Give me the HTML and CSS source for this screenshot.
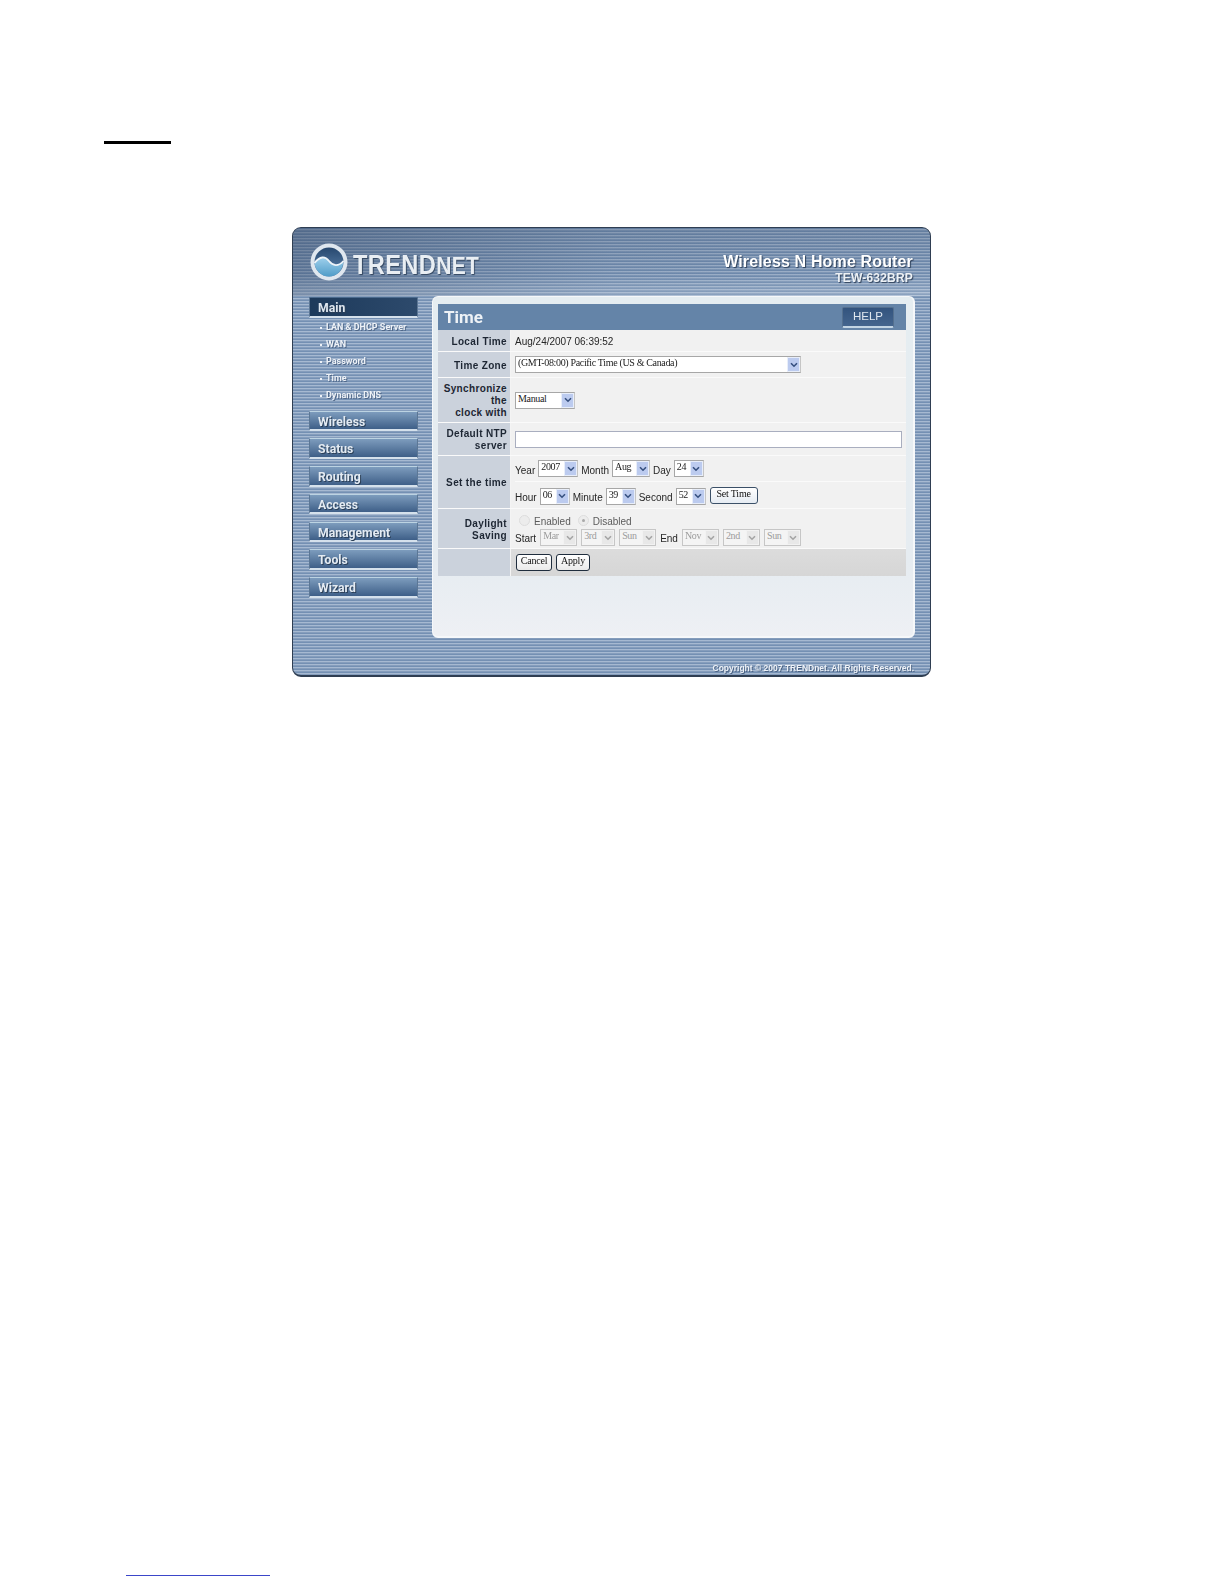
FILE: index.html
```html
<!DOCTYPE html>
<html lang="en">
<head>
<meta charset="utf-8">
<title>Time</title>
<link rel="stylesheet" href="styles.css">
</head>
<body>
<div class="rule"></div>
<div class="panel">
  <header class="top">
    <div class="logo">
      <svg class="globe" width="38" height="38" viewBox="0 0 38 38">
        <defs>
          <linearGradient id="gl" x1="0" y1="0" x2="0" y2="1">
            <stop offset="0" stop-color="#27486f"/><stop offset="1" stop-color="#5f86b0"/>
          </linearGradient>
          <linearGradient id="gw" x1="0" y1="0" x2="0" y2="1">
            <stop offset="0" stop-color="#9fd0ec"/><stop offset="1" stop-color="#4f9cc8"/>
          </linearGradient>
        </defs>
        <circle cx="19" cy="19" r="18.5" fill="#dfe7ef"/>
        <circle cx="19" cy="19" r="14.5" fill="url(#gl)"/>
        <path d="M4.5 20C10 13 15 13 19 18C23 23 28 24 33.5 18C33 27 27 33.5 19 33.5C11 33.5 5 27 4.5 20Z" fill="url(#gw)"/>
        <path d="M4.5 20C10 13 15 13 19 18C23 23 28 24 33.5 18" fill="none" stroke="#eef4f9" stroke-width="1.8"/>
      </svg>
      <span class="brand">TREND<span class="net">NET</span></span>
    </div>
    <div class="product">
      <div class="pname">Wireless N Home Router</div>
      <div class="pmodel">TEW-632BRP</div>
    </div>
  </header>
  <div class="mid">
    <nav class="side">
      <a class="nav active">Main</a>
      <ul class="sub">
        <li>LAN &amp; DHCP Server</li>
        <li>WAN</li>
        <li>Password</li>
        <li>Time</li>
        <li>Dynamic DNS</li>
      </ul>
      <div class="navlist">
        <a class="nav">Wireless</a>
        <a class="nav">Status</a>
        <a class="nav">Routing</a>
        <a class="nav">Access</a>
        <a class="nav">Management</a>
        <a class="nav">Tools</a>
        <a class="nav">Wizard</a>
      </div>
    </nav>
    <main class="card">
      <div class="title">
        <h1>Time</h1>
        <a class="help">HELP</a>
      </div>
      <div class="form">
        <div class="row r-local">
          <div class="lab">Local Time</div>
          <div class="val"><span class="txt">Aug/24/2007 06:39:52</span></div>
        </div>
        <div class="row r-zone">
          <div class="lab">Time Zone</div>
          <div class="val"><span class="sel w-zone"><span class="st">(GMT-08:00) Pacific Time (US &amp; Canada)</span><span class="ar"><svg viewBox="0 0 8 6"><path d="M1 1.2L4 4.2L7 1.2" /></svg></span></span></div>
        </div>
        <div class="row r-sync">
          <div class="lab">Synchronize<br>the<br>clock with</div>
          <div class="val"><span class="sel w-man"><span class="st">Manual</span><span class="ar"><svg viewBox="0 0 8 6"><path d="M1 1.2L4 4.2L7 1.2" /></svg></span></span></div>
        </div>
        <div class="row r-ntp">
          <div class="lab">Default NTP<br>server</div>
          <div class="val"><span class="field"></span></div>
        </div>
        <div class="row r-set">
          <div class="lab">Set the time</div>
          <div class="val stack">
            <div class="line l-year">
              <span class="txt">Year</span>
              <span class="sel w-y"><span class="st">2007</span><span class="ar"><svg viewBox="0 0 8 6"><path d="M1 1.2L4 4.2L7 1.2" /></svg></span></span>
              <span class="txt">Month</span>
              <span class="sel w-m"><span class="st">Aug</span><span class="ar"><svg viewBox="0 0 8 6"><path d="M1 1.2L4 4.2L7 1.2" /></svg></span></span>
              <span class="txt">Day</span>
              <span class="sel w-d"><span class="st">24</span><span class="ar"><svg viewBox="0 0 8 6"><path d="M1 1.2L4 4.2L7 1.2" /></svg></span></span>
            </div>
            <div class="line l-hour">
              <span class="txt">Hour</span>
              <span class="sel w-d"><span class="st">06</span><span class="ar"><svg viewBox="0 0 8 6"><path d="M1 1.2L4 4.2L7 1.2" /></svg></span></span>
              <span class="txt">Minute</span>
              <span class="sel w-d"><span class="st">39</span><span class="ar"><svg viewBox="0 0 8 6"><path d="M1 1.2L4 4.2L7 1.2" /></svg></span></span>
              <span class="txt">Second</span>
              <span class="sel w-d"><span class="st">52</span><span class="ar"><svg viewBox="0 0 8 6"><path d="M1 1.2L4 4.2L7 1.2" /></svg></span></span>
              <span class="btn btn-set">Set Time</span>
            </div>
          </div>
        </div>
        <div class="row r-day">
          <div class="lab">Daylight<br>Saving</div>
          <div class="val stack">
            <div class="line l-radio">
              <span class="radio"></span><span class="txt grey">Enabled</span>
              <span class="radio on"></span><span class="txt grey">Disabled</span>
            </div>
            <div class="line l-start">
              <span class="txt">Start</span>
              <span class="sel off w-dd"><span class="st">Mar</span><span class="ar"><svg viewBox="0 0 8 6"><path d="M1 1.2L4 4.2L7 1.2" /></svg></span></span>
              <span class="sel off w-dd2"><span class="st">3rd</span><span class="ar"><svg viewBox="0 0 8 6"><path d="M1 1.2L4 4.2L7 1.2" /></svg></span></span>
              <span class="sel off w-dd"><span class="st">Sun</span><span class="ar"><svg viewBox="0 0 8 6"><path d="M1 1.2L4 4.2L7 1.2" /></svg></span></span>
              <span class="txt">End</span>
              <span class="sel off w-dd"><span class="st">Nov</span><span class="ar"><svg viewBox="0 0 8 6"><path d="M1 1.2L4 4.2L7 1.2" /></svg></span></span>
              <span class="sel off w-dd"><span class="st">2nd</span><span class="ar"><svg viewBox="0 0 8 6"><path d="M1 1.2L4 4.2L7 1.2" /></svg></span></span>
              <span class="sel off w-dd"><span class="st">Sun</span><span class="ar"><svg viewBox="0 0 8 6"><path d="M1 1.2L4 4.2L7 1.2" /></svg></span></span>
            </div>
          </div>
        </div>
        <div class="row r-act">
          <div class="lab"></div>
          <div class="val"><span class="btn btn-c">Cancel</span><span class="btn btn-a">Apply</span></div>
        </div>
      </div>
    </main>
  </div>
  <footer class="foot">Copyright © 2007 TRENDnet. All Rights Reserved.</footer>
</div>
<div class="linkline"></div>
</body>
</html>
```
FILE: styles.css
```css
* { box-sizing: border-box; }
html, body { margin: 0; padding: 0; background: #fff; }
body { width: 1224px; height: 1584px; overflow: hidden; font-family: "Liberation Sans", Arial, sans-serif; }

.rule { width: 67px; height: 3px; margin: 141px 0 0 104px; background: #000; }

.panel {
  width: 639px; height: 450px; margin: 83px 0 0 292px;
  border-radius: 9px; overflow: hidden;
  border: solid #2f3e52; border-width: 1px 1px 2px 1px;
  background: repeating-linear-gradient(180deg, #7490b3 0 1px, #a6b9d1 1px 2px, #859dbc 2px 3px);
  display: flex; flex-direction: column;
  filter: blur(0.4px);
}

.top {
  height: 68px; flex: none; display: flex; justify-content: space-between;
  padding: 15px 17px 0 17px;
  background:
    linear-gradient(180deg, rgba(40,58,86,.22), rgba(40,58,86,.06) 70%, rgba(255,255,255,.18) 100%),
    linear-gradient(90deg, rgba(50,72,104,.35), rgba(80,105,140,.08) 50%, rgba(0,0,0,0));
}
.logo { display: flex; align-items: flex-start; gap: 5px; }
.globe { flex: none; }
.brand {
  margin-top: 8px; color: #e9eef3; font-size: 27px; line-height: 28px;
  font-weight: bold; letter-spacing: 0.4px; transform: scaleX(.875); transform-origin: left center;
  text-shadow: 1px 1px 1px #33465f;
}
.net { font-size: 24px; }
.product { text-align: right; color: #fff; padding-top: 10px; text-shadow: 1px 1px 1px #2f415a; }
.pname { font-size: 16px; line-height: 17px; font-weight: bold; letter-spacing: .15px; }
.pmodel { margin-top: 2px; font-size: 12px; line-height: 13px; font-weight: bold; letter-spacing: .2px; color: #edf1f5; }

.mid { height: 342px; flex: none; display: flex; padding-left: 16px; }
.side { width: 109px; flex: none; display: flex; flex-direction: column; padding-top: 1px; }
.nav {
  display: block; height: 20.5px; padding: 2px 0 0 8px;
  font-family: Roboto, "Liberation Sans", sans-serif;
  font-size: 12.2px; line-height: 16px; font-weight: 700; color: #e4ebf2;
  background: linear-gradient(180deg, #7d9cbd, #3e5f88);
  border: 1px solid #5c7795; border-top: 1px solid #bcd3e2; border-bottom: 2px solid #d5e1ec;
  text-shadow: 1px 1px 0 #2c4058;
}
.nav.active {
  color: #dfe7ef;
  background: linear-gradient(90deg, #1d3a5b, #2d4a6c);
  border-top: 1px solid #4a6a8d;
}
.sub { list-style: none; margin: 0; padding: 1px 0 7px 11px; }
.sub li {
  height: 17px; font-family: Roboto, "Liberation Sans", sans-serif; font-size: 9px; line-height: 17px; font-weight: 700; color: #eef2f7; padding-left: 6px;
  position: relative; text-shadow: 1px 1px 0 #4f6788;
}
.sub li::before { content: ""; width: 2px; height: 2px; background: #eef2f7; position: absolute; left: 0; top: 8px; }
.navlist { display: flex; flex-direction: column; gap: 7.3px; }

.card {
  margin-left: 14px; width: 483px; height: 342px; padding: 7px 7px 0 5px;
  background: linear-gradient(180deg, #e5edf1 0%, #e6ecf1 78%, #eef0f4 100%);
  border-radius: 6px; border: 1px solid #f6f8fa; border-width: 1px 2px 2px 1px;
  color: #222;
}
.title {
  height: 26px; background: #6484a8; display: flex; justify-content: space-between; padding: 3px 12px 0 6px;
}
.title h1 { margin: -1px 0 0; font-family: Roboto, "Liberation Sans", sans-serif; font-size: 17px; line-height: 22px; font-weight: 700; color: #eef2f6; }
.help {
  width: 52px; height: 21px; color: #dfe7ef; font-size: 11.5px; line-height: 17px; text-align: center;
  background: linear-gradient(180deg, #33547e, #44658e);
  border: 1px solid #54708f; border-bottom: 2px solid #c3d5e4; border-radius: 2px;
}

.row { display: flex; border-bottom: 1px solid #fafafa; }
.lab {
  width: 73px; flex: none; background: #cbd2dc; border-right: 1px solid #f4f4f4; text-align: right;
  padding: 2px 3px 0 0; font-weight: bold; font-size: 10px; line-height: 12px; letter-spacing: .35px; color: #1d2633;
  display: flex; align-items: center; justify-content: flex-end;
}
.val { flex: 1; background: #f1f1f1; padding-left: 4px; display: flex; align-items: center; }
.r-local .val { padding-top: 2px; }
.r-local { height: 22px; }
.r-zone { height: 26px; }
.r-sync { height: 45px; }
.r-ntp { height: 33px; }
.r-set { height: 53px; }
.r-day { height: 40px; }
.r-act { height: 27px; border-bottom: 0; }
.r-act .val { background: linear-gradient(180deg, #dcdcdc, #d6d6d6); padding-left: 5px; gap: 4px; }

.txt { font-size: 10px; line-height: 12px; color: #262626; white-space: nowrap; }
.grey { color: #5b5b5b; }
.stack { flex-direction: column; align-items: stretch; justify-content: flex-start; }
.line { display: flex; align-items: flex-start; gap: 3px; }
.l-year { height: 26px; padding-top: 4px; border-bottom: 1px solid #fafafa; }
.l-hour { height: 27px; padding-top: 6px; }
.l-year .txt { margin-top: 5px; }
.l-hour .txt { margin-top: 4px; }
.l-radio { height: 20px; padding: 7px 0 0 4px; gap: 4px; }
.l-radio .txt + .radio { margin-left: 3px; }
.l-start { height: 19px; gap: 4px; }
.l-start .txt { margin-top: 4px; }

.sel {
  display: inline-flex; height: 17px; background: #fff; border: 1px solid #a7a7a7; border-right-color: #c5c5c5;
  justify-content: space-between; align-items: stretch; flex: none;
}
.st {
  font-family: "Liberation Serif", serif; font-size: 10px; line-height: 12px; padding-left: 2px; color: #222; white-space: nowrap;
  letter-spacing: -.34px;
}
.ar { width: 13px; background: #bccbef; display: flex; align-items: center; justify-content: center; flex: none; border: 1px solid #e8eefa; }
.ar svg { width: 8px; height: 6px; fill: none; stroke: #36507f; stroke-width: 1.6; }
.w-zone { width: 286px; }
.w-man { width: 60px; }
.w-y { width: 40px; }
.w-m { width: 38px; }
.w-d { width: 30px; }
.off { border-color: #c6c6c6; background: #f4f4f4; }
.off .st { color: #9b9b9b; }
.off .ar { background: #e8e8e8; border-color: #f2f2f2; }
.off .ar svg { stroke: #a4a4a4; }
.w-dd { width: 37px; }
.w-dd2 { width: 34px; }
.field { display: block; width: 387px; height: 17px; background: #fff; border: 1px solid #a9aebf; }
.btn {
  display: inline-block; height: 17px; border: 1px solid #1f2d3d; border-radius: 3px; text-align: center;
  font-family: "Liberation Serif", serif; font-size: 10px; line-height: 12px; color: #111; letter-spacing: -.2px;
  background: linear-gradient(180deg, #fff, #eaeaea);
}
.btn-c { width: 36px; }
.btn-a { width: 34px; }
.btn-set { width: 48px; margin-left: 1px; margin-top: -1px; background: linear-gradient(180deg, #fff, #e6ecf3); border-color: #3b5068; }
.radio { width: 11px; height: 11px; margin-top: -1px; border-radius: 50%; background: #ececec; border: 1px solid #dcdcdc; position: relative; flex: none; }
.radio.on::after { content: ""; position: absolute; left: 3px; top: 3px; width: 3px; height: 3px; border-radius: 50%; background: #a9a9a9; }

.foot {
  flex: 1; padding: 25px 16px 0 0; text-align: right; font-size: 8.5px; line-height: 10px; font-weight: bold;
  color: #eef2f7; text-shadow: 1px 1px 0 #4a6283;
}

.linkline { width: 144px; height: 1px; margin: 898px 0 0 126px; background: #3b46c9; }
```
